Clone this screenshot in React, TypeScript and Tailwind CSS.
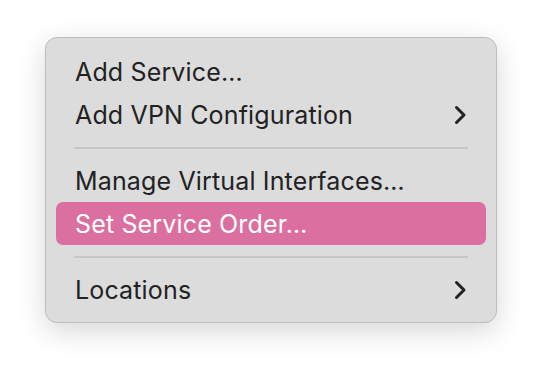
const Chevron = ({ className = '' }: { className?: string }) => (
  <svg width="13" height="20" viewBox="0 0 13 20" className={className} fill="none">
    <path d="M2.5 2.5 L10 10 L2.5 17.5" stroke="currentColor" strokeWidth="3" strokeLinecap="round" strokeLinejoin="round" />
  </svg>
);

type Item = { label: string; submenu?: boolean; active?: boolean } | 'sep';

const items: Item[] = [
  { label: 'Add Service…' },
  { label: 'Add VPN Configuration', submenu: true },
  'sep',
  { label: 'Manage Virtual Interfaces…' },
  { label: 'Set Service Order…', active: true },
  'sep',
  { label: 'Locations', submenu: true },
];

export default function App() {
  return (
    <div className="w-[542px] h-[376px] bg-white pt-[37px] pl-[45px]" style={{ fontFamily: 'Inter, "Noto Sans", sans-serif' }}>
      <div className="w-[452px] h-[286px] rounded-[12px] border border-[#bdbdbd] bg-[#dcdcdc] px-[10px] pt-[12px] pb-[11px] shadow-[0_8px_28px_rgba(0,0,0,0.16)]">
        {items.map((item, i) =>
          item === 'sep' ? (
            <div key={i} className="h-[23px] flex items-center px-[18px]">
              <div className="h-[2px] w-full bg-[#c6c6c6]" />
            </div>
          ) : (
            <div
              key={i}
              className={`h-[43px] flex items-center justify-between pl-[19px] pr-[19px] rounded-[7px] text-[25px] tracking-[0.15px] ${
                item.active ? 'bg-[#db70a0] text-white' : 'text-[#222222]'
              }`}
            >
              <span className="translate-y-[1px]">{item.label}</span>
              {item.submenu && <Chevron className="text-[#222222]" />}
            </div>
          )
        )}
      </div>
    </div>
  );
}
